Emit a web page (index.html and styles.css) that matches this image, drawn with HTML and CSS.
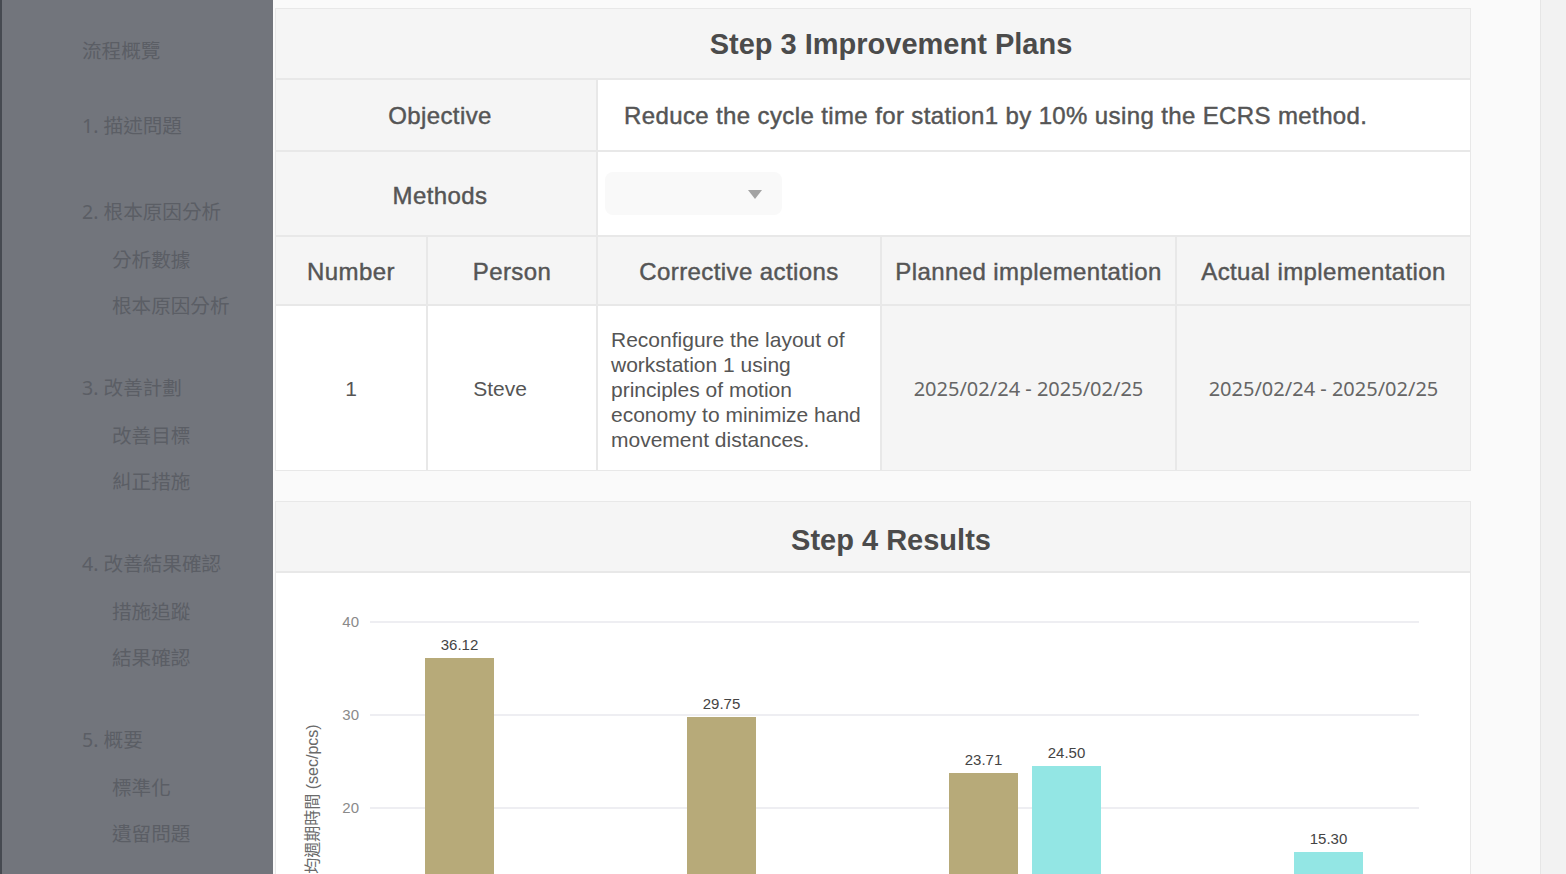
FILE: index.html
```html
<!DOCTYPE html>
<html lang="zh-Hant">
<head>
<meta charset="utf-8">
<title>Improvement Plans</title>
<link rel="stylesheet" href="styles.css">
</head>
<body>
<aside class="sidebar">
  <nav class="nav">
    <div class="nav-item nav-top">流程概覽</div>
    <div class="nav-group nav-first">
      <div class="nav-item">1. 描述問題</div>
    </div>
    <div class="nav-group">
      <div class="nav-item">2. 根本原因分析</div>
      <div class="nav-sub">分析數據</div>
      <div class="nav-sub">根本原因分析</div>
    </div>
    <div class="nav-group">
      <div class="nav-item">3. 改善計劃</div>
      <div class="nav-sub">改善目標</div>
      <div class="nav-sub">糾正措施</div>
    </div>
    <div class="nav-group">
      <div class="nav-item">4. 改善結果確認</div>
      <div class="nav-sub">措施追蹤</div>
      <div class="nav-sub">結果確認</div>
    </div>
    <div class="nav-group">
      <div class="nav-item">5. 概要</div>
      <div class="nav-sub">標準化</div>
      <div class="nav-sub">遺留問題</div>
    </div>
  </nav>
</aside>
<main class="main">
  <section class="card plan">
    <div class="cell title span-all">Step 3 Improvement Plans</div>
    <div class="cell label span-2">Objective</div>
    <div class="cell value span-3 objective">Reduce the cycle time for station1 by 10% using the ECRS method.</div>
    <div class="cell label span-2 methods">Methods</div>
    <div class="cell value span-3">
      <div class="select"><span class="caret"></span></div>
    </div>
    <div class="cell label">Number</div>
    <div class="cell label">Person</div>
    <div class="cell label">Corrective actions</div>
    <div class="cell label">Planned implementation</div>
    <div class="cell label">Actual implementation</div>
    <div class="cell body">1</div>
    <div class="cell body person">Steve</div>
    <div class="cell body action">Reconfigure the layout of workstation 1 using principles of motion economy to minimize hand movement distances.</div>
    <div class="cell date">2025/02/24 - 2025/02/25</div>
    <div class="cell date">2025/02/24 - 2025/02/25</div>
  </section>

  <section class="card results">
    <div class="cell title results-title">Step 4 Results</div>
    <div class="cell chart">
      <svg class="chart-svg" width="1194" height="440" viewBox="0 0 1194 440">
        <g class="grid">
          <line x1="94" y1="49" x2="1143" y2="49"/>
          <line x1="94" y1="142" x2="1143" y2="142"/>
          <line x1="94" y1="235" x2="1143" y2="235"/>
          <line x1="94" y1="328" x2="1143" y2="328"/>
        </g>
        <g class="ylabels">
          <text x="83" y="54">40</text>
          <text x="83" y="147">30</text>
          <text x="83" y="240">20</text>
        </g>
        <text class="ytitle" x="42" y="234" transform="rotate(-90 42 234)">平均週期時間 (sec/pcs)</text>
        <g class="bars">
          <rect class="gold" x="149" y="85" width="69" height="336"/>
          <rect class="gold" x="411" y="144" width="69" height="277"/>
          <rect class="gold" x="673" y="200" width="69" height="221"/>
          <rect class="cyan" x="756" y="193" width="69" height="228"/>
          <rect class="cyan" x="1018" y="279" width="69" height="142"/>
        </g>
        <g class="vlabels">
          <text x="183.5" y="77">36.12</text>
          <text x="445.5" y="136">29.75</text>
          <text x="707.5" y="192">23.71</text>
          <text x="790.5" y="185">24.50</text>
          <text x="1052.5" y="271">15.30</text>
        </g>
      </svg>
    </div>
  </section>
</main>
<div class="rail"></div>
</body>
</html>
```

FILE: styles.css
```css
html, body {
  margin: 0;
  padding: 0;
  height: 100%;
}
body {
  display: flex;
  overflow: hidden;
  background: #fafafa;
  font-family: "Liberation Sans", Arial, "Noto Sans CJK TC", sans-serif;
  color: #555;
}

/* Sidebar */
.sidebar {
  flex: 0 0 271px;
  background: #72757c;
  border-left: 2px solid #464a51;
  height: 100%;
}
.nav {
  display: flex;
  flex-direction: column;
  padding: 27px 0 0 80px;
  font-family: "Noto Sans", "Noto Sans CJK TC", sans-serif;
  font-size: 19.6px;
  color: #5b5e65;
}
.nav-item {
  height: 48px;
  line-height: 48px;
}
.nav-top {
  margin-bottom: 27px;
}
.nav-group {
  display: flex;
  flex-direction: column;
  margin-bottom: 36px;
}
.nav-first {
  margin-bottom: 38px;
}
.nav-sub {
  height: 46px;
  line-height: 47px;
  padding-left: 30px;
}

/* Main */
.main {
  flex: 0 0 1267px;
  display: flex;
  flex-direction: column;
  gap: 30px;
  padding: 8px 0 0 2px;
  box-sizing: border-box;
  height: 100%;
  overflow: hidden;
}
.rail {
  flex: 1 1 auto;
  background: #f2f2f2;
  border-left: 1px solid #e6e6e6;
}

.card {
  width: 1196px;
  box-sizing: border-box;
  background: #e8e8e8;
  padding: 1px;
  display: grid;
  gap: 2px;
  flex: 0 0 auto;
}
.plan {
  grid-template-columns: 150px 168px 282px 293px 1fr;
  grid-template-rows: 69px 70px 83px 67px 164px;
}
.results {
  grid-template-columns: 1fr;
  grid-template-rows: 69px 440px;
}

.cell {
  display: flex;
  align-items: center;
  justify-content: center;
  background: #f5f5f5;
  box-sizing: border-box;
}
.span-all { grid-column: 1 / -1; }
.span-2 { grid-column: span 2; }
.span-3 { grid-column: span 3; }

.title {
  font-size: 29px;
  font-weight: bold;
  color: #4b4b4b;
  padding-left: 36px;
  padding-top: 2px;
}
.results-title {
  padding-top: 8px;
}
.label {
  font-size: 24px;
  letter-spacing: 0.4px;
  -webkit-text-stroke: 0.45px currentColor;
  color: #555;
  padding-top: 2px;
}
.label.span-2 {
  padding-left: 8px;
}
.label.methods {
  padding-top: 4px;
}
.value {
  background: #fff;
  justify-content: flex-start;
  padding-left: 26px;
}
.objective {
  font-size: 24px;
  letter-spacing: 0.38px;
  -webkit-text-stroke: 0.45px currentColor;
  color: #555;
  padding-top: 2px;
}
.select {
  width: 177px;
  height: 43px;
  margin-left: -19px;
  border-radius: 8px;
  background: #f9f9f9;
  position: relative;
}
.caret {
  position: absolute;
  left: 143px;
  top: 18px;
  width: 0;
  height: 0;
  border-left: 7px solid transparent;
  border-right: 7px solid transparent;
  border-top: 9px solid #a3a3a3;
}
.body {
  background: #fff;
  font-size: 21px;
  color: #555;
  padding-top: 2px;
}
.person {
  padding-right: 24px;
}
.action {
  justify-content: flex-start;
  text-align: left;
  padding: 2px 12px 0 13px;
  line-height: 25px;
}
.date {
  font-family: "Noto Sans", "Open Sans", sans-serif;
  font-size: 20px;
  color: #666;
}

.chart {
  background: #fff;
  align-items: flex-start;
  justify-content: flex-start;
  padding: 0;
}
.chart-svg {
  display: block;
}
.grid line {
  stroke: #e9e9ee;
  stroke-width: 1.5;
}
.ylabels text {
  font-family: "Liberation Sans", Arial, sans-serif;
  font-size: 15px;
  fill: #8a8a8a;
  text-anchor: end;
}
.ytitle {
  font-family: "Liberation Sans", "Noto Sans CJK TC", sans-serif;
  font-size: 16px;
  fill: #6a6a6a;
  text-anchor: middle;
}
.gold { fill: #b7aa79; }
.cyan { fill: #93e6e4; }
.vlabels text {
  font-family: "Liberation Sans", Arial, sans-serif;
  font-size: 15px;
  fill: #444;
  text-anchor: middle;
}
```
